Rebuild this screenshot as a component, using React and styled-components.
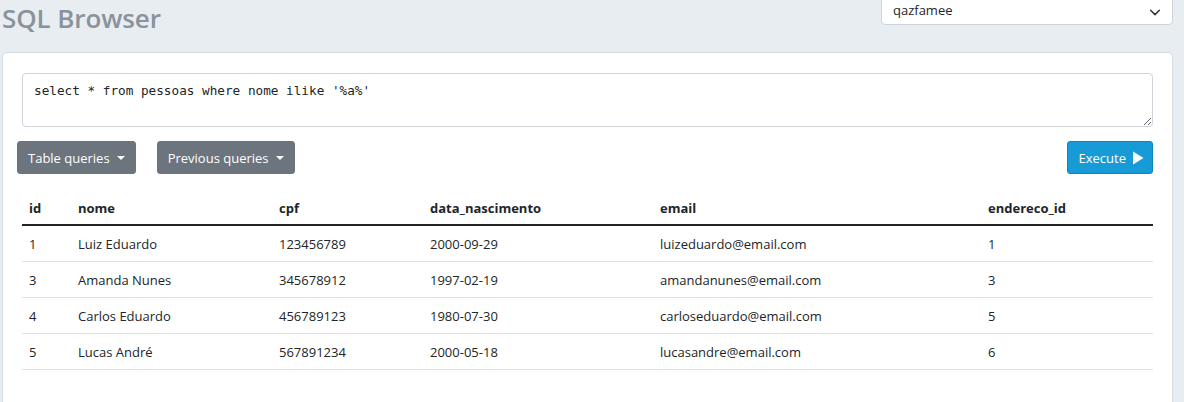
import React from "react";
import styled, { createGlobalStyle } from "styled-components";

const Global = createGlobalStyle`
  html, body { margin: 0; padding: 0; }
  body {
    background: #e8edf1;
    font-family: "Open Sans", "Noto Sans", sans-serif;
    color: #212529;
    overflow: hidden;
  }
`;

const Page = styled.div`
  padding: 0 11px 0 2px;
  margin-top: -12px;
`;

const Header = styled.header`
  display: flex;
  justify-content: space-between;
  align-items: flex-start;
  height: 64px;
`;

const Title = styled.h1`
  margin: 13px 0 0 0;
  font-size: 26px;
  line-height: 34px;
  font-weight: 600;
  color: #8a929b;
  letter-spacing: -0.1px;
`;

const SelectBox = styled.div`
  width: 292px;
  height: 37px;
  box-sizing: border-box;
  background: #fff;
  border: 1px solid #ced4da;
  border-radius: 4px;
  display: flex;
  align-items: flex-end;
  justify-content: space-between;
  padding: 0 10px 5px 11px;
  font-size: 13px;
  color: #212529;
`;

const Card = styled.main`
  background: #fff;
  border: 1px solid #d3dde8;
  border-radius: 5px;
  padding: 20px 19px 40px 19px;
`;

const Editor = styled.textarea`
  display: block;
  width: 100%;
  box-sizing: border-box;
  height: 54px;
  border: 1px solid #ced4da;
  border-radius: 4px;
  padding: 9px 11px 7px 11px;
  font-family: "DejaVu Sans Mono", "Liberation Mono", monospace;
  font-size: 12.7px;
  color: #212529;
  resize: vertical;
  outline: none;
`;

const Toolbar = styled.div`
  display: flex;
  align-items: center;
  gap: 21px;
  margin: 14px 0 16px -5px;
`;

const Spacer = styled.div`
  flex: 1;
`;

const Button = styled.button`
  display: inline-flex;
  align-items: center;
  gap: 6px;
  height: 33px;
  border: 1px solid ${(p) => (p.$variant === "info" ? "#0b87be" : "#6c757d")};
  border-radius: 3px;
  padding: ${(p) => (p.$variant === "info" ? "0 8px 0 11px" : "0 10px")};
  background: ${(p) => (p.$variant === "info" ? "#169bd7" : "#6c757d")};
  color: #fff;
  font-family: "Open Sans", "Noto Sans", sans-serif;
  font-size: 13px;
  cursor: pointer;
`;

const Caret = styled.span`
  width: 0;
  height: 0;
  border-left: 4px solid transparent;
  border-right: 4px solid transparent;
  border-top: 4px solid #fff;
  margin-left: 1px;
`;

const Table = styled.table`
  width: 100%;
  border-collapse: collapse;
  table-layout: fixed;
  font-size: 13px;
`;

const Th = styled.th`
  width: ${(p) => p.$w}px;
  text-align: left;
  font-weight: 700;
  padding: 8px 7px 6px 7px;
  height: 35px;
  box-sizing: border-box;
  border-bottom: 2px solid #212529;
`;

const Td = styled.td`
  padding: 0 7px;
  height: 35px;
  border-bottom: 1px solid #dee2e6;
  color: #212529;
`;

const cols = [
  ["id", 49],
  ["nome", 201],
  ["cpf", 151],
  ["data_nascimento", 230],
  ["email", 328],
  ["endereco_id", 172],
];

const rows = [
  ["1", "Luiz Eduardo", "123456789", "2000-09-29", "luizeduardo@email.com", "1"],
  ["3", "Amanda Nunes", "345678912", "1997-02-19", "amandanunes@email.com", "3"],
  ["4", "Carlos Eduardo", "456789123", "1980-07-30", "carloseduardo@email.com", "5"],
  ["5", "Lucas André", "567891234", "2000-05-18", "lucasandre@email.com", "6"],
];

export default function App() {
  return (
    <>
      <Global />
      <Page>
        <Header>
          <Title>SQL Browser</Title>
          <SelectBox>
            <span>qazfamee</span>
            <svg width="14" height="14" viewBox="0 0 16 16" fill="none">
              <path d="M3 6l5 5 5-5" stroke="#343a40" strokeWidth="1.8" strokeLinecap="round" strokeLinejoin="round" />
            </svg>
          </SelectBox>
        </Header>
        <Card>
          <Editor defaultValue={"select * from pessoas where nome ilike '%a%'"} spellCheck={false} />
          <Toolbar>
            <Button>
              Table queries <Caret />
            </Button>
            <Button>
              Previous queries <Caret />
            </Button>
            <Spacer />
            <Button $variant="info">
              Execute
              <svg width="12" height="14" viewBox="0 0 12 14">
                <path d="M1 0.5 L11.5 7 L1 13.5 Z" fill="#fff" />
              </svg>
            </Button>
          </Toolbar>
          <Table>
            <thead>
              <tr>
                {cols.map(([c, w]) => (
                  <Th key={c} $w={w}>{c}</Th>
                ))}
              </tr>
            </thead>
            <tbody>
              {rows.map((r) => (
                <tr key={r[0]}>
                  {r.map((v, i) => (
                    <Td key={i}>{v}</Td>
                  ))}
                </tr>
              ))}
            </tbody>
          </Table>
        </Card>
      </Page>
    </>
  );
}
